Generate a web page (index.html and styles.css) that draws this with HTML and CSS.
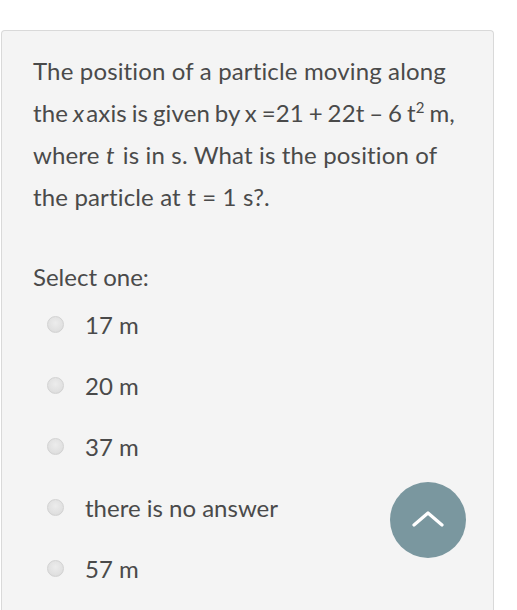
FILE: index.html
```html
<!DOCTYPE html>
<html lang="en">
<head>
<meta charset="utf-8">
<title>Question</title>
<link rel="stylesheet" href="styles.css">
</head>
<body>
<div class="card">
  <p class="qtext"><span class="ln">The position of a particle moving along</span><br><span class="ln tight">the <i>x</i>axis is given by x =21 + 22t – 6 t<sup>2</sup> m,</span><br><span class="ln">where <i>t</i> is in s. What is the position of</span><br><span class="ln">the particle at t = 1 s?.</span></p>
  <p class="prompt">Select one:</p>
  <div class="options">
    <label class="option"><span class="radio"></span><span class="otext">17 m</span></label>
    <label class="option"><span class="radio"></span><span class="otext">20 m</span></label>
    <label class="option"><span class="radio"></span><span class="otext">37 m</span></label>
    <label class="option"><span class="radio"></span><span class="otext">there is no answer</span></label>
    <label class="option"><span class="radio"></span><span class="otext">57 m</span></label>
  </div>
</div>
<button class="totop" aria-label="Back to top">
  <svg width="32" height="16" viewBox="0 0 32 16"><path d="M2 14 L16 2 L30 14" fill="none" stroke="#fff" stroke-width="3.2" stroke-linecap="round" stroke-linejoin="round"/></svg>
</button>
</body>
</html>
```
FILE: styles.css
```css
html, body {
  margin: 0;
  padding: 0;
  background: #ffffff;
}
body {
  font-family: "Lato", "Open Sans", sans-serif;
  color: #4a4a4a;
  height: 610px;
  overflow: hidden;
}
.card {
  margin: 30px 0 0 1px;
  width: 493px;
  height: 600px;
  border: 1px solid #d9d9d9;
  border-bottom: none;
  border-radius: 4px 4px 0 0;
  background: #f4f4f4;
  padding: 19px 0 0 31px;
  box-sizing: border-box;
}
.qtext {
  margin: 0;
  font-size: 24px;
  line-height: 42px;
  letter-spacing: 0.15px;
  white-space: nowrap;
}
.qtext i {
  margin-right: 2px;
}
.tight {
  word-spacing: -1.5px;
}
.qtext sup {
  font-size: 15px;
  line-height: 0;
  vertical-align: 9px;
}
.prompt {
  margin: 38px 0 0 0;
  font-size: 24px;
  line-height: 42px;
}
.options {
  display: flex;
  flex-direction: column;
  margin-top: -4px;
}
.option {
  display: flex;
  align-items: center;
  height: 61px;
  font-size: 24px;
}
.radio {
  width: 17px;
  height: 17px;
  border-radius: 50%;
  margin-left: 14px;
  margin-right: 21px;
  background: radial-gradient(circle at 50% 40%, #ececec 0%, #e0e0e0 65%, #d2d2d2 100%);
  border: 1px solid #d2d2d2;
  box-sizing: border-box;
}
.totop {
  position: absolute;
  left: 390px;
  top: 482px;
  width: 76px;
  height: 76px;
  border-radius: 50%;
  border: none;
  padding: 0;
  background: #7a979f;
  display: flex;
  align-items: center;
  justify-content: center;
}
.totop svg {
  margin-bottom: 2px;
}
```
